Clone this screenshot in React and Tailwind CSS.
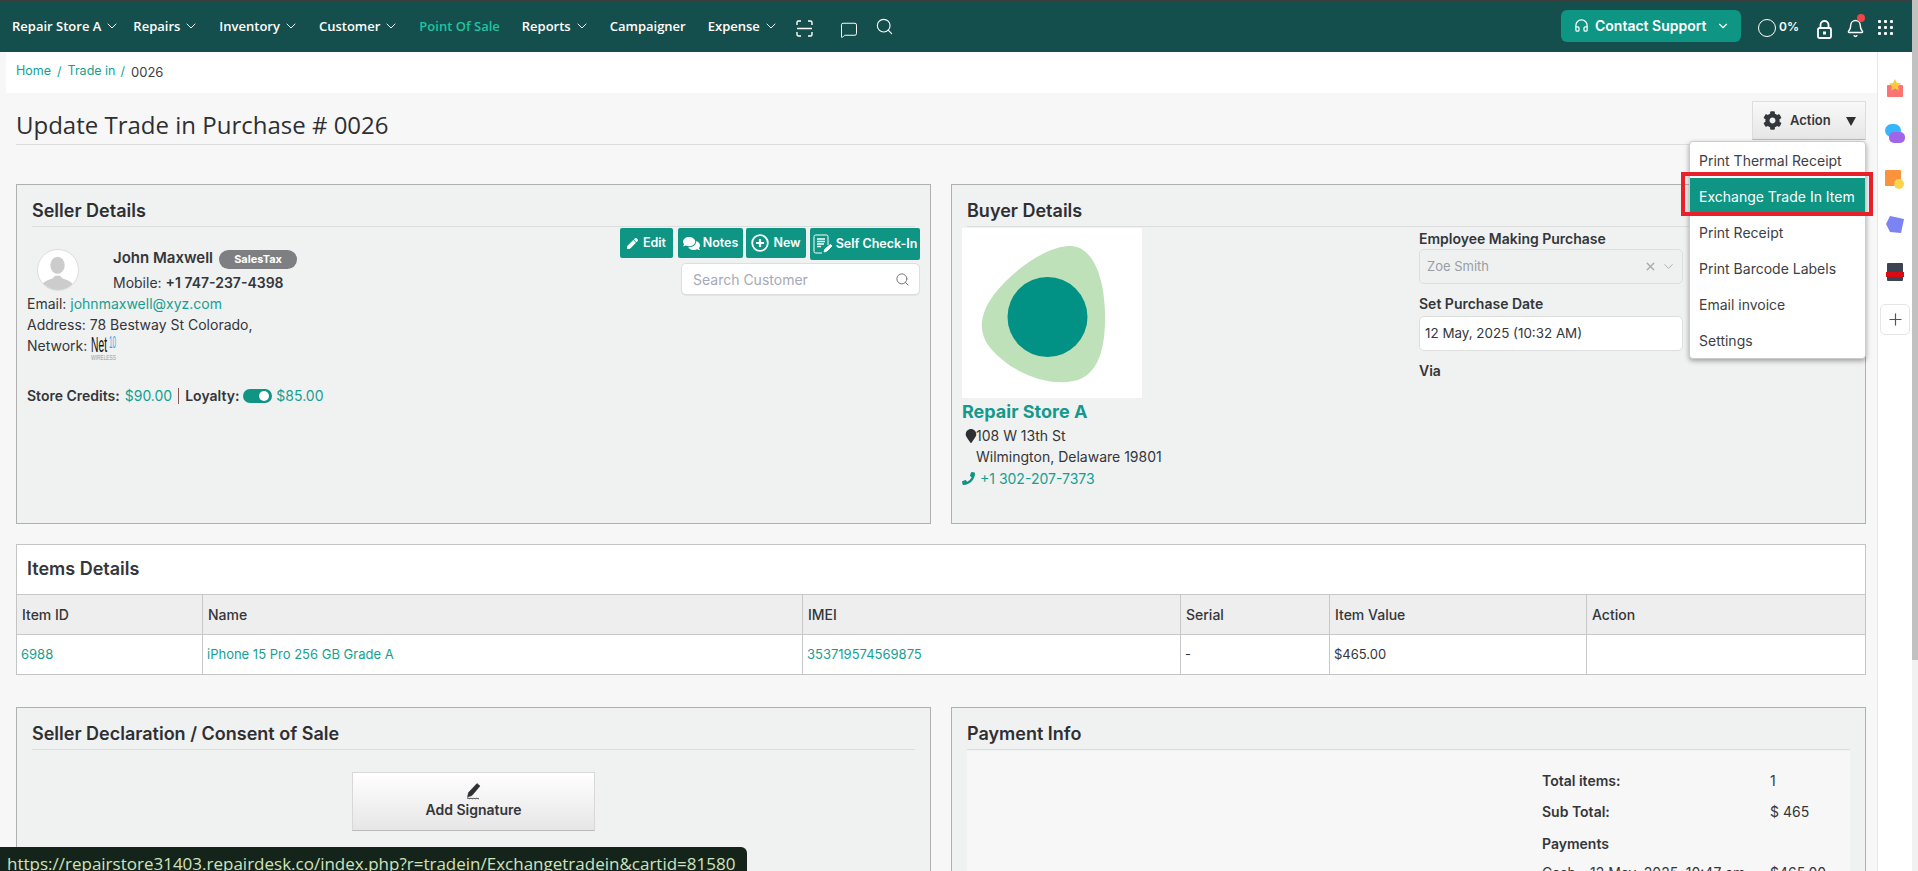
import React from "react";
import {
  ChevronDown,
  Headphones,
  Bell,
  MessageSquare,
  Search,
  Plus,
  X,
} from "lucide-react";
import { FaCog, FaPen, FaComments, FaPhoneAlt, FaMapMarker } from "react-icons/fa";

const navItems = [
  { label: "Repairs", caret: true },
  { label: "Inventory", caret: true },
  { label: "Customer", caret: true },
  { label: "Point Of Sale", active: true },
  { label: "Reports", caret: true },
  { label: "Campaigner" },
  { label: "Expense", caret: true },
];

const menuItems = [
  "Print Thermal Receipt",
  "Exchange Trade In Item",
  "Print Receipt",
  "Print Barcode Labels",
  "Email invoice",
  "Settings",
];

const NavItem = ({ label, caret, active }) => (
  <div className="flex items-center gap-[3px]">
    <span className={`text-[13px] font-semibold ${active ? "text-[#1fc4a0] mt-[1px]" : "text-white"}`}>{label}</span>
    {caret && <ChevronDown size={16} strokeWidth={1.4} className="text-white -mr-[2px] -mt-[2px]" />}
  </div>
);

const Header = () => (
  <header className="h-[52px] bg-[#154f4d] border-t-2 border-[#3a3f3c] flex items-center relative [font-family:Open_Sans,sans-serif]">
    <div className="flex items-center gap-[22px] pl-[12px] -mt-[1px]">
      <div className="mr-[-7px]">
        <NavItem label="Repair Store A" caret />
      </div>
      {navItems.map((item) => (
        <NavItem key={item.label} {...item} />
      ))}
    </div>
    {/* scan, chat, search */}
    <svg className="absolute left-[796px] top-[18px]" width="17" height="17" viewBox="0 0 17 17" fill="none" stroke="white" strokeWidth="1.4">
      <path d="M1 5V2.5A1.5 1.5 0 0 1 2.5 1H5M12 1h2.5A1.5 1.5 0 0 1 16 2.5V5M16 12v2.500A1.5 1.5 0 0 1 14.500 16H12M5 16H2.500A1.5 1.5 0 0 1 1 14.500V12M1 8.500h15" />
    </svg>
    <MessageSquare size={18} strokeWidth={1.3} className="absolute left-[840px] top-[19px] text-white" />
    <Search size={19} strokeWidth={1.4} className="absolute left-[875px] top-[15px] text-white" />

    <button className="absolute left-[1561px] top-[8px] w-[180px] h-[32px] rounded-[6px] bg-[#0e9584] text-white flex items-center pl-[13px] pb-[1px] gap-[6px] text-[14px] font-semibold [font-family:Inter,sans-serif]">
      <Headphones size={15} strokeWidth={2} />
      <span>Contact Support</span>
      <ChevronDown size={14} strokeWidth={2} className="ml-[3px]" />
    </button>
    <div className="absolute left-[1758px] top-[17px] w-[18px] h-[18px] rounded-full border-[1.5px] border-white" />
    <span className="absolute left-[1779px] top-[16px] text-white text-[12px] font-semibold [font-family:Inter,sans-serif]">0%</span>
    <svg className="absolute left-[1817px] top-[18px]" width="15" height="19" viewBox="0 0 15 19" fill="none" stroke="white" strokeWidth="1.8">
      <path d="M3.500 8V5a4 4 0 0 1 8 0v3" />
      <rect x="1" y="8" width="13" height="10" rx="1.500" />
      <rect x="6" y="11.500" width="3" height="3" fill="white" strokeWidth="0" />
    </svg>
    <Bell size={19} strokeWidth={1.8} className="absolute left-[1846px] top-[17px] text-white" />
    <div className="absolute left-[1857px] top-[12px] w-[8px] h-[8px] rounded-full bg-[#f04545]" />
    <div className="absolute left-[1878px] top-[18px] grid grid-cols-3 gap-[3px]">
      {Array.from({ length: 9 }).map((_, i) => (
        <span key={i} className="w-[3px] h-[3px] bg-white rounded-[1px]" />
      ))}
    </div>
  </header>
);

const CardTitle = ({ children }) => (
  <div className="h-[42px] mx-[15px] border-b border-[#dcdddd] flex items-center text-[18px] font-semibold text-[#2f2f33] pt-[10px]">
    {children}
  </div>
);

const TealBtn = ({ className, children }) => (
  <button className={`bg-[#0e9584] text-white text-[12.500px] font-semibold rounded-[2px] flex items-center justify-center ${className}`}>
    {children}
  </button>
);

const Avatar = () => (
  <div className="absolute left-[20px] top-[64px] w-[42px] h-[42px] rounded-full bg-white border border-[#dddddd] overflow-hidden">
    <svg viewBox="0 0 42 42" className="w-full h-full" fill="#cccccc">
      <ellipse cx="20.500" cy="16" rx="7.500" ry="9" />
      <path d="M3 42c0-8 6-10 12-12l3-3h5l3 3c6 2 12 4 12 12z" />
    </svg>
  </div>
);

const SellerCard = () => (
  <section className="relative h-[340px] bg-[#f0f1f1] border border-[#b0b0b0] text-[14px] text-[#33363a]">
    <CardTitle>Seller Details</CardTitle>
    <Avatar />
    <div className="absolute left-[96px] top-[62px] flex items-center">
      <span className="text-[15px] font-semibold">John Maxwell</span>
      <span className="ml-[6px] mt-[2px] w-[78px] h-[19px] rounded-full bg-[#7d7f82] text-white text-[11px] font-bold flex items-center justify-center">SalesTax</span>
    </div>
    <div className="absolute left-[96px] top-[87px]">
      Mobile: <span className="font-semibold">+1 747-237-4398</span>
    </div>
    <div className="absolute left-[10px] top-[108px]">
      Email: <span className="text-[#14a091]">johnmaxwell@xyz.com</span>
    </div>
    <div className="absolute left-[10px] top-[129px]">Address: 78 Bestway St Colorado,</div>
    <div className="absolute left-[10px] top-[150px]">Network:</div>
    {/* carrier logo */}
    <svg className="absolute left-[74px] top-[149px] overflow-visible" width="26" height="27" viewBox="0 0 26 27">
      <text x="0" y="18" fontSize="22" fill="#111111" textLength="16" lengthAdjust="spacingAndGlyphs" fontFamily="Liberation Sans, sans-serif">Net</text>
      <text x="18" y="14" fontSize="16" fill="#29a9e0" textLength="7" lengthAdjust="spacingAndGlyphs" fontFamily="Liberation Sans, sans-serif">10</text>
      <text x="0" y="26" fontSize="8" fill="#999999" textLength="25" lengthAdjust="spacingAndGlyphs" fontFamily="Liberation Sans, sans-serif">WIRELESS</text>
    </svg>
    <div className="absolute left-[10px] top-[200px] flex items-center">
      <span className="font-semibold">Store Credits:</span>
      <span className="text-[#14a091] ml-[5px]">$90.00</span>
      <span className="w-px h-[16px] bg-[#8b5a50] ml-[6px] mr-[6px]" />
      <span className="font-semibold">Loyalty:</span>
      <span className="relative ml-[4px] w-[29px] h-[14px] rounded-full bg-[#0e9584]">
        <span className="absolute right-[3px] top-[2px] w-[10px] h-[10px] rounded-full bg-white" />
      </span>
      <span className="text-[#14a091] ml-[4px]">$85.00</span>
    </div>

    <TealBtn className="absolute left-[603px] top-[43px] w-[53px] h-[30px] gap-[5px]">
      <FaPen size={11} /> Edit
    </TealBtn>
    <TealBtn className="absolute left-[661px] top-[43px] w-[65px] h-[30px] gap-[3px]">
      <FaComments size={17} /> Notes
    </TealBtn>
    <TealBtn className="absolute left-[729px] top-[43px] w-[60px] h-[30px] gap-[4px]">
      <svg width="18" height="18" viewBox="0 0 18 18" fill="none" stroke="white" strokeWidth="1.8">
        <circle cx="9" cy="9" r="7.800" />
        <path d="M9 5v8M5 9h8" strokeWidth="2.200" />
      </svg>
      New
    </TealBtn>
    <TealBtn className="absolute left-[793px] top-[43px] w-[110px] h-[32px] gap-[3px]">
      <svg width="20" height="20" viewBox="0 0 20 20" fill="none" stroke="white" strokeWidth="1">
        <path d="M15 11V2.500A1.500 1.500 0 0 0 13.500 1H2.500A1.500 1.500 0 0 0 1 2.500V17.500A1.500 1.500 0 0 0 2.500 19H9" />
        <path d="M4 5h8M4 7.500h8M4 10h7M4 12.500h4" strokeWidth="1.300" />
        <path d="M11 18l1-3 5.500-4.500 1.500 1.500-5 5z" fill="white" />
      </svg>
      Self Check-In
    </TealBtn>
    <div className="absolute left-[664px] top-[78px] w-[239px] h-[32px] bg-white rounded-[5px] border border-[#dddde2] flex items-center pl-[11px] pr-[9px] justify-between shadow-[0_1px_1px_rgba(0,0,0,0.06)]">
      <span className="text-[14px] text-[#a6a9b5]">Search Customer</span>
      <Search size={15} strokeWidth={1.6} className="text-[#777777]" />
    </div>
  </section>
);

const StoreLogo = () => (
  <div className="absolute left-[10px] top-[43px] w-[180px] h-[170px] bg-white">
    <svg viewBox="0 0 180 170" className="w-full h-full">
      <path d="M106 18C128 16 142 44 143 84C144 122 136 152 105 154C80 156 50 144 30 122C14 104 18 84 34 64C52 42 82 20 106 18Z" fill="#bee1b9" />
      <circle cx="85.500" cy="89" r="40" fill="#019185" />
    </svg>
  </div>
);

const BuyerCard = () => (
  <section className="relative h-[340px] bg-[#f0f1f1] border border-[#b0b0b0] text-[14px] text-[#33363a]">
    <CardTitle>Buyer Details</CardTitle>
    <StoreLogo />
    <div className="absolute left-[10px] top-[213px] text-[18px] font-bold text-[#14998c]">Repair Store A</div>
    <FaMapMarker size={14} className="absolute left-[12px] top-[244px] text-[#2f2f33]" />
    <div className="absolute left-[24px] top-[240px]">108 W 13th St</div>
    <div className="absolute left-[24px] top-[261px]">Wilmington, Delaware 19801</div>
    <FaPhoneAlt size={13} className="absolute left-[10px] top-[287px] text-[#0e9584] -scale-x-100" />
    <div className="absolute left-[28px] top-[283px] text-[#14a091]">+1 302-207-7373</div>

    <div className="absolute left-[467px] top-[43px] font-semibold">Employee Making Purchase</div>
    <div className="absolute left-[467px] top-[64px] w-[264px] h-[35px] rounded-[5px] border border-[#dddfdf] bg-[#eff1f1] flex items-center pl-[7px] text-[13px] text-[#9a9da3]">
      Zoe Smith
      <X size={13} strokeWidth={2.600} className="absolute left-[224px] top-[10px] text-[#aaaaaa]" />
      <ChevronDown size={15} strokeWidth={1.500} className="absolute left-[241px] top-[9px] text-[#aaaaaa]" />
    </div>
    <div className="absolute left-[467px] top-[108px] font-semibold">Set Purchase Date</div>
    <div className="absolute left-[467px] top-[131px] w-[264px] h-[35px] rounded-[5px] border border-[#dddfdf] bg-white flex items-center pl-[5px] text-[13.400px]">
      12 May, 2025 (10:32 AM)
    </div>
    <div className="absolute left-[467px] top-[175px] font-semibold">Via</div>
  </section>
);

const cols = ["w-[186px]", "w-[600px]", "w-[378px]", "w-[149px]", "w-[257px]", "flex-1"];

const ItemsTable = () => {
  const heads = ["Item ID", "Name", "IMEI", "Serial", "Item Value", "Action"];
  const row = [
    { t: "6988", link: true },
    { t: "iPhone 15 Pro 256 GB Grade A", link: true },
    { t: "353719574569875", link: true },
    { t: "-" },
    { t: "$465.00" },
    { t: "" },
  ];
  return (
    <section className="mt-[20px] h-[131px] bg-white border border-[#c4c4c4] text-[#33363a]">
      <div className="h-[49px] pl-[10px] pb-[2px] flex items-center text-[18px] font-semibold">Items Details</div>
      <div className="flex h-[41px] bg-[#eeeeee] border-y border-[#c8c8c8] text-[14px] font-medium">
        {heads.map((h, i) => (
          <div key={h} className={`${cols[i]} pl-[5px] flex items-center ${i < 5 ? "border-r border-[#c8c8c8]" : ""}`}>
            {h}
          </div>
        ))}
      </div>
      <div className="flex h-[39px] text-[13px]">
        {row.map((c, i) => (
          <div key={i} className={`${cols[i]} pl-[4px] flex items-center ${i < 5 ? "border-r border-[#c8c8c8]" : ""} ${c.link ? "text-[#14a091]" : ""}`}>
            {c.t}
          </div>
        ))}
      </div>
    </section>
  );
};

const ActionMenu = () => (
  <>
    <button className="absolute left-[1752px] top-[101px] w-[114px] h-[39px] border border-[#dddddd] border-b-[#bbbbbb] bg-gradient-to-b from-[#f9f9f9] to-[#e6e6e6] flex items-center text-[13px] font-semibold text-[#33363a]">
      <FaCog size={19} className="ml-[10px] mr-[8px]" />
      Action
      <span className="ml-[15px] w-0 h-0 border-x-[5px] border-x-transparent border-t-[9px] border-t-[#2f2f33] mt-[2px]" />
    </button>
    <div className="absolute left-[1689px] top-[141px] w-[177px] h-[218px] bg-white rounded-[4px] border border-[#cccccc] shadow-[0_2px_5px_rgba(0,0,0,0.35)] text-[14px] text-[#3d4045] z-10">
      {menuItems.map((m) => (
        <div key={m} className={`h-[36px] flex items-center pl-[9px] ${m === "Exchange Trade In Item" ? "bg-[#0e9584] text-white" : ""}`}>
          {m}
        </div>
      ))}
    </div>
    <div className="absolute left-[1681px] top-[172px] w-[192px] h-[44px] border-[4px] border-[#e8202a] z-20" />
  </>
);

const RightRail = () => (
  <aside className="absolute left-[1877px] top-[52px] w-[35px] h-[819px] bg-white border-l border-[#e8e8e8]">
    <svg className="absolute left-[8px] top-[27px]" width="18" height="20" viewBox="0 0 18 20">
      <rect x="1" y="6" width="16" height="12" rx="1" fill="#fb7373" />
      <path d="M9 0l2 4 4 .5-3 3 .8 4L9 9.500 5.200 11.500l.8-4-3-3L7 4z" fill="#fbc940" />
    </svg>
    <svg className="absolute left-[7px] top-[72px]" width="20" height="20" viewBox="0 0 20 20">
      <rect x="0" y="0" width="16" height="13" rx="6.500" fill="#37b6fb" />
      <rect x="4" y="8" width="16" height="11" rx="5" fill="#a165e8" />
    </svg>
    <svg className="absolute left-[7px] top-[118px]" width="20" height="20" viewBox="0 0 20 20">
      <rect x="0" y="0" width="16" height="16" rx="1" fill="#fb923c" />
      <circle cx="14" cy="14" r="5" fill="#fcd34d" />
    </svg>
    <svg className="absolute left-[7px] top-[163px]" width="20" height="20" viewBox="0 0 20 20">
      <path d="M5 1l14 3-3 14-11-1-4-8z" fill="#7c83f2" />
    </svg>
    <svg className="absolute left-[8px] top-[211px]" width="18" height="18" viewBox="0 0 18 18">
      <rect x="1" y="0" width="16" height="18" rx="1" fill="#3d4350" />
      <rect x="0" y="9" width="18" height="5" fill="#dc0a12" />
    </svg>
    <div className="absolute left-[2px] top-[252px] w-[30px] h-[31px] rounded-[5px] border border-[#e5e5e5] flex items-center justify-center">
      <Plus size={19} strokeWidth={1.500} className="text-[#555555]" />
    </div>
  </aside>
);

const App = () => (
  <div className="relative w-[1918px] h-[871px] overflow-hidden bg-[#f7f7f7] [font-family:Inter,sans-serif]">
    <Header />
    <div className="h-[41px] ml-[6px] w-[1871px] bg-white pl-[10px] flex items-center text-[12.500px]">
      <span className="text-[#14a091] -mt-[3px]">Home</span>
      <span className="text-[#14a091] ml-[6px] mr-[6px]">/</span>
      <span className="text-[#14a091] -mt-[3px]">Trade in</span>
      <span className="text-[#14a091] ml-[5px] mr-[6px]">/</span>
      <span className="text-[#3d4045] text-[13px] mt-[1px]">0026</span>
    </div>
    <div className="mx-[16px] w-[1850px] h-[52px] pt-[12px] border-b border-[#dddddd] flex items-center text-[24px] text-[#2f2f33] [font-family:Open_Sans,sans-serif]">
      Update Trade in Purchase # 0026
    </div>
    <main className="w-[1850px] ml-[16px] mt-[39px]">
      <div className="grid grid-cols-2 gap-[20px]">
        <SellerCard />
        <BuyerCard />
      </div>
      <ItemsTable />
      <div className="grid grid-cols-2 gap-[20px] mt-[32px]">
        <section className="relative h-[300px] bg-[#f0f1f1] border border-[#b0b0b0] text-[#33363a]">
          <CardTitle>Seller Declaration / Consent of Sale</CardTitle>
          <button className="absolute left-[335px] top-[64px] w-[243px] h-[59px] border border-[#d8d8d8] border-b-[#bbbbbb] bg-gradient-to-b from-white to-[#e6e6e6] flex flex-col items-center pt-[10px] text-[14px] font-semibold">
            <svg width="15" height="17" viewBox="0 0 15 17" fill="none" stroke="#2f2f33">
              <path d="M11 0.500l3 2.500-8 9.500-4.500 1.500 1-4.500z" fill="#2f2f33" strokeWidth="0.500" />
              <path d="M1 15.500c1-1.500 2 1 3 0s2 1 3 0 2 1 3 0 2 1 3 0" strokeWidth="1" />
            </svg>
            <span className="-mt-[1px]">Add Signature</span>
          </button>
        </section>
        <section className="relative h-[300px] bg-[#f0f1f1] border border-[#b0b0b0] text-[#33363a]">
          <CardTitle>Payment Info</CardTitle>
          <div className="absolute left-[15px] right-[15px] top-[43px] bottom-0 bg-[#f7f7f7] text-[14px]">
            <div className="absolute left-[575px] top-[19px] font-semibold">Total items:</div>
            <div className="absolute left-[803px] top-[19px]">1</div>
            <div className="absolute left-[575px] top-[50px] font-semibold">Sub Total:</div>
            <div className="absolute left-[803px] top-[50px]">$ 465</div>
            <div className="absolute left-[575px] top-[82px] font-semibold">Payments</div>
            <div className="absolute left-[575px] top-[111px]">Cash - 12 May, 2025, 10:47 am</div>
            <div className="absolute left-[803px] top-[111px]">$465.00</div>
          </div>
        </section>
      </div>
    </main>
    <ActionMenu />
    <RightRail />
    <div className="absolute left-[1912px] top-[0px] w-[6px] h-[871px] bg-[#f1f1f1]">
      <div className="w-full h-[660px] bg-[#c1c1c1]" />
    </div>
    <div className="absolute left-0 top-[847px] w-[747px] h-[24px] bg-[#15241a] rounded-tr-[6px] text-[#cfe3bf] text-[17px] pl-[7px] leading-[33px] whitespace-nowrap [font-family:Open_Sans,sans-serif]">
      https://repairstore31403.repairdesk.co/index.php?r=tradein/Exchangetradein&cartid=81580
    </div>
  </div>
);

export default App;
